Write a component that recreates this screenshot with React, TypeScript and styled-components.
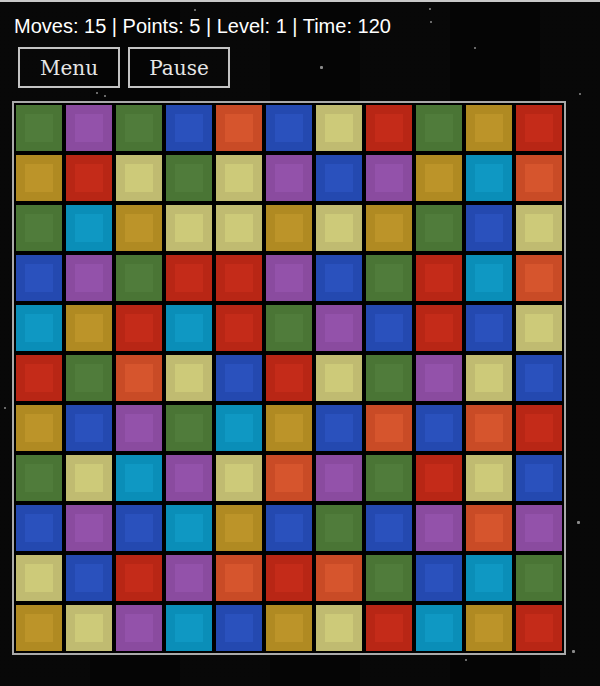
import React from "react";
import styled, { createGlobalStyle } from "styled-components";

const GlobalStyle = createGlobalStyle`
	html, body {
		margin: 0;
		padding: 0;
		background: #050505;
	}
`;

const Page = styled.div`
	position: relative;
	box-sizing: border-box;
	min-height: 686px;
	width: 600px;
	border-top: 2px solid #c9c9c9;
	padding: 12px 0 0 12px;
	background-color: #050505;
	background-image: repeating-linear-gradient(
		90deg,
		rgba(255, 255, 255, 0.012) 0 90px,
		rgba(0, 0, 0, 0) 90px 180px
	);
	overflow: hidden;
`;

const Star = styled.span<{ $size: number }>`
	position: absolute;
	width: ${({ $size }) => $size}px;
	height: ${({ $size }) => $size}px;
	background: #8a8a8a;
	border-radius: 1px;
`;

const Stats = styled.div`
	padding-left: 2px;
	font-family: "Liberation Sans", Arial, sans-serif;
	font-size: 20px;
	line-height: 24px;
	color: #fff;
`;

const Toolbar = styled.div`
	display: flex;
	gap: 8px;
	margin: 9px 0 0 6px;
`;

const Button = styled.button`
	box-sizing: border-box;
	width: 102px;
	height: 41px;
	padding: 0;
	background: transparent;
	border: 2px solid #c4c4c4;
	color: #e6e6e6;
	font-family: "DejaVu Serif", serif;
	font-size: 20px;
	cursor: pointer;
`;

const Board = styled.div`
	display: grid;
	grid-template-columns: repeat(11, 50px);
	grid-auto-rows: 50px;
	width: fit-content;
	margin-top: 13px;
	border: 2px solid #a9a9a9;
	background: #000;
`;

type Tone = { outer: string; inner: string };

const tones: Record<string, Tone> = {
	G: { outer: "#4a7535", inner: "#507c3b" },
	P: { outer: "#8a4b9f", inner: "#9352aa" },
	B: { outer: "#2449b0", inner: "#2a51bd" },
	O: { outer: "#c94b26", inner: "#d6552d" },
	Y: { outer: "#c0bb71", inner: "#cdca79" },
	R: { outer: "#b82615", inner: "#c42b19" },
	A: { outer: "#b08a22", inner: "#bc9429" },
	C: { outer: "#0a8eb8", inner: "#0f98c3" },
};

const Cell = styled.div<{ $tone: Tone }>`
	box-sizing: border-box;
	border: 2px solid #000;
	background: ${({ $tone }) => $tone.outer};
	display: flex;
	align-items: center;
	justify-content: center;
`;

const Core = styled.div<{ $tone: Tone }>`
	width: 28px;
	height: 28px;
	background: ${({ $tone }) => $tone.inner};
`;

const rows = [
	"GPGBOBYRGAR",
	"ARYGYPBPACO",
	"GCAYYAYAGBY",
	"BPGRRPBGRCO",
	"CARCRGPBRBY",
	"RGOYBRYGPYB",
	"ABPGCABOBOR",
	"GYCPYOPGRYB",
	"BPBCABGBPOP",
	"YBRPOROGBCG",
	"AYPCBAYRCAR",
];

const stars = [
	{ x: 320, y: 66, s: 3 },
	{ x: 429, y: 8, s: 2 },
	{ x: 430, y: 21, s: 2 },
	{ x: 474, y: 47, s: 2 },
	{ x: 579, y: 93, s: 2 },
	{ x: 194, y: 9, s: 2 },
	{ x: 104, y: 95, s: 2 },
	{ x: 96, y: 92, s: 2 },
	{ x: 577, y: 521, s: 3 },
	{ x: 572, y: 650, s: 3 },
	{ x: 465, y: 659, s: 2 },
	{ x: 4, y: 407, s: 2 },
];

const App = () => {
	return (
		<>
			<GlobalStyle />
			<Page>
				{stars.map((st, i) => (
					<Star key={i} $size={st.s} style={{ left: st.x, top: st.y - 2 }} />
				))}
				<Stats>Moves: 15 | Points: 5 | Level: 1 | Time: 120</Stats>
				<Toolbar>
					<Button>Menu</Button>
					<Button>Pause</Button>
				</Toolbar>
				<Board>
					{rows.map((row, r) =>
						row.split("").map((key, c) => (
							<Cell key={`${r}-${c}`} $tone={tones[key]}>
								<Core $tone={tones[key]} />
							</Cell>
						))
					)}
				</Board>
			</Page>
		</>
	);
};

export default App;
